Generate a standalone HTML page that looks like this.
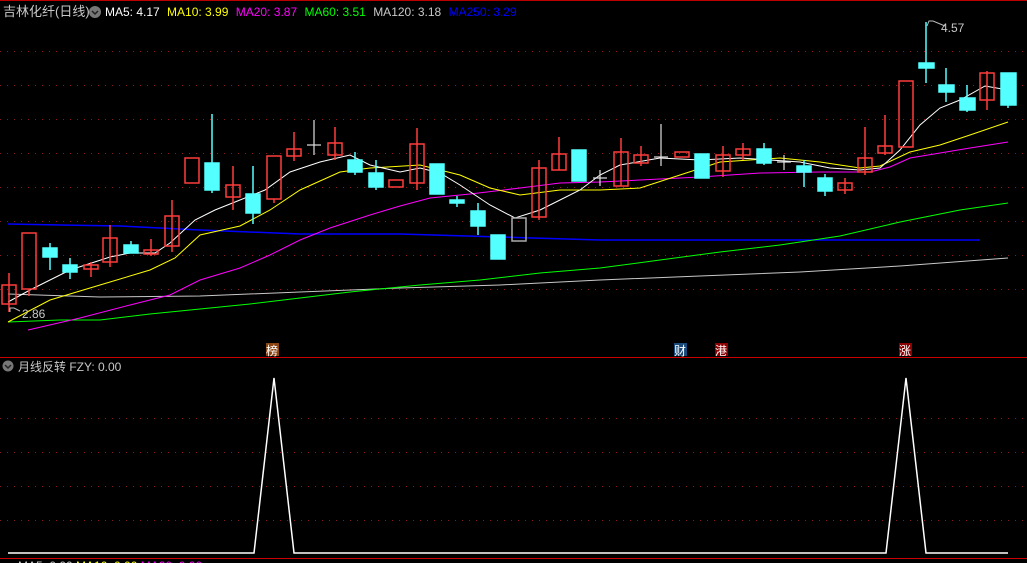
<!DOCTYPE html>
<html><head><meta charset="utf-8"><style>
html,body{margin:0;padding:0;background:#000;width:1027px;height:563px;overflow:hidden}
svg{display:block}
text{font-family:"Liberation Sans","Noto Sans CJK SC",sans-serif}
</style></head><body>
<svg width="1027" height="563" viewBox="0 0 1027 563" xmlns="http://www.w3.org/2000/svg">
<rect width="1027" height="563" fill="#000"/>
<line x1="0" y1="0.5" x2="1027" y2="0.5" stroke="#b00" />
<g stroke="#8a1a1a" stroke-dasharray="1,6" stroke-width="1">
<line x1="0" y1="51.5" x2="1027" y2="51.5"/><line x1="0" y1="85.5" x2="1027" y2="85.5"/>
<line x1="0" y1="119.5" x2="1027" y2="119.5"/><line x1="0" y1="153.5" x2="1027" y2="153.5"/>
<line x1="0" y1="187.5" x2="1027" y2="187.5"/><line x1="0" y1="221.5" x2="1027" y2="221.5"/>
<line x1="0" y1="255.5" x2="1027" y2="255.5"/><line x1="0" y1="289.5" x2="1027" y2="289.5"/>
<line x1="0" y1="418.5" x2="1027" y2="418.5"/>
<line x1="0" y1="452.5" x2="1027" y2="452.5"/><line x1="0" y1="486.5" x2="1027" y2="486.5"/>
<line x1="0" y1="520.5" x2="1027" y2="520.5"/>
</g>
<line x1="0" y1="357.5" x2="1027" y2="357.5" stroke="#c00"/>
<line x1="0" y1="558.5" x2="1027" y2="558.5" stroke="#c00"/>

<!-- MA lines -->
<polyline fill="none" stroke="#0000ff" stroke-width="1.5" points="8,224 60,225 120,226 200,230 300,234 400,234 500,237 600,240 700,240 800,240 900,240 980,240"/>
<polyline fill="none" stroke="#c8c8c8" stroke-width="1" points="8,294 100,297 200,296 300,292 400,288 500,285 600,280 700,276 800,272 900,266 1008,258"/>
<polyline fill="none" stroke="#00ff00" stroke-width="1" points="8,322 60,320 100,320 150,314 200,309 250,304 300,298 350,292 420,285 480,280 540,273 600,268 660,260 720,252 780,245 840,236 900,222 960,210 1008,203"/>
<polyline fill="none" stroke="#ff00ff" stroke-width="1" points="28,330 80,318 130,305 170,295 200,280 240,268 270,255 300,240 330,228 370,215 400,206 430,198 470,194 520,188 560,183 600,182 640,180 700,177 760,173 820,172 870,172 890,167 910,158 940,153 970,148 1008,142"/>
<polyline fill="none" stroke="#ffff00" stroke-width="1" points="8,322 50,300 100,285 150,270 175,258 200,235 240,226 270,210 300,190 340,172 370,168 420,165 460,175 490,188 520,195 560,190 600,190 640,188 680,175 720,162 780,158 820,162 860,168 880,166 910,152 940,145 970,135 1008,122"/>
<polyline fill="none" stroke="#ffffff" stroke-width="1" points="8,302 30,290 70,270 110,257 130,253 155,253 170,243 195,220 215,210 240,200 265,190 290,172 320,162 350,155 370,165 400,172 420,168 440,173 460,185 490,205 515,218 540,210 560,200 580,190 600,175 620,165 660,158 700,160 740,158 770,160 800,162 830,168 860,170 880,168 900,150 920,125 940,108 960,100 985,86 1008,90"/>

<!-- candles -->
<g stroke-width="1.5">
<g stroke="#ff3c3c" fill="none">
<line x1="9" y1="273" x2="9" y2="312"/><rect x="2" y="285" width="14" height="19"/>
<line x1="29" y1="289" x2="29" y2="296"/><rect x="22" y="233" width="14" height="56"/>
<line x1="91" y1="262" x2="91" y2="277"/><rect x="84" y="265" width="14" height="4"/>
<line x1="110" y1="225" x2="110" y2="267"/><rect x="103" y="238" width="14" height="24"/>
<line x1="151" y1="239" x2="151" y2="256"/><rect x="144" y="250" width="14" height="4"/>
<line x1="172" y1="200" x2="172" y2="252"/><rect x="165" y="216" width="14" height="30"/>
<rect x="185" y="158" width="14" height="25"/>
<line x1="233" y1="166" x2="233" y2="210"/><rect x="226" y="185" width="14" height="12"/>
<line x1="274" y1="199" x2="274" y2="203"/><rect x="267" y="156" width="14" height="43"/>
<line x1="294" y1="132" x2="294" y2="161"/><rect x="287" y="149" width="14" height="7"/>
<line x1="335" y1="127" x2="335" y2="160"/><rect x="328" y="143" width="14" height="12"/>
<rect x="389" y="180" width="14" height="7"/>
<line x1="417" y1="128" x2="417" y2="190"/><rect x="410" y="144" width="14" height="39"/>
<rect x="512" y="218" width="14" height="23" stroke="#aaa"/>
<line x1="539" y1="160" x2="539" y2="220"/><rect x="532" y="168" width="14" height="49"/>
<line x1="559" y1="137" x2="559" y2="170"/><rect x="552" y="154" width="14" height="16"/>
<line x1="621" y1="138" x2="621" y2="186"/><rect x="614" y="152" width="14" height="34"/>
<line x1="641" y1="146" x2="641" y2="166"/><rect x="634" y="155" width="14" height="8"/>
<rect x="675" y="152" width="14" height="5"/>
<line x1="723" y1="146" x2="723" y2="177"/><rect x="716" y="155" width="14" height="16"/>
<line x1="743" y1="143" x2="743" y2="160"/><rect x="736" y="149" width="14" height="6"/>
<line x1="845" y1="178" x2="845" y2="194"/><rect x="838" y="183" width="14" height="7"/>
<line x1="865" y1="127" x2="865" y2="175"/><rect x="858" y="158" width="14" height="14"/>
<line x1="885" y1="115" x2="885" y2="155"/><rect x="878" y="146" width="14" height="7"/>
<rect x="899" y="81" width="14" height="66"/>
<line x1="987" y1="71" x2="987" y2="110"/><rect x="980" y="73" width="14" height="27"/>
</g>
<g stroke="#54ffff" fill="#54ffff">
<line x1="50" y1="243" x2="50" y2="270"/><rect x="43" y="248" width="14" height="9"/>
<line x1="70" y1="258" x2="70" y2="279"/><rect x="63" y="265" width="14" height="7"/>
<line x1="131" y1="241" x2="131" y2="253"/><rect x="124" y="245" width="14" height="8"/>
<line x1="212" y1="114" x2="212" y2="193"/><rect x="205" y="163" width="14" height="27"/>
<line x1="253" y1="166" x2="253" y2="224"/><rect x="246" y="194" width="14" height="19"/>
<line x1="355" y1="152" x2="355" y2="175"/><rect x="348" y="160" width="14" height="12"/>
<line x1="376" y1="160" x2="376" y2="190"/><rect x="369" y="173" width="14" height="14"/>
<rect x="430" y="164" width="14" height="30"/>
<line x1="457" y1="196" x2="457" y2="207"/><rect x="450" y="200" width="14" height="3"/>
<line x1="478" y1="203" x2="478" y2="235"/><rect x="471" y="211" width="14" height="15"/>
<rect x="491" y="235" width="14" height="24"/>
<rect x="572" y="150" width="14" height="31"/>
<rect x="695" y="154" width="14" height="24"/>
<line x1="764" y1="143" x2="764" y2="165"/><rect x="757" y="149" width="14" height="14"/>
<line x1="804" y1="160" x2="804" y2="187"/><rect x="797" y="166" width="14" height="6"/>
<line x1="825" y1="174" x2="825" y2="196"/><rect x="818" y="178" width="14" height="13"/>
<line x1="926" y1="22" x2="926" y2="83"/><rect x="919" y="63" width="15" height="5"/>
<line x1="946" y1="68" x2="946" y2="102"/><rect x="939" y="85" width="15" height="7"/>
<line x1="967" y1="85" x2="967" y2="112"/><rect x="960" y="98" width="15" height="12"/>
<line x1="1008" y1="73" x2="1008" y2="108"/><rect x="1001" y="73" width="15" height="32"/>
</g>
<g stroke="#e0e0e0" stroke-width="1.2">
<line x1="314" y1="120" x2="314" y2="155"/><line x1="307" y1="145" x2="321" y2="145"/>
<line x1="661" y1="124" x2="661" y2="166"/><line x1="654" y1="157" x2="668" y2="157"/>
<line x1="784" y1="155" x2="784" y2="170"/><line x1="777" y1="162" x2="791" y2="162"/>
<line x1="600" y1="170" x2="600" y2="186"/><line x1="593" y1="178" x2="607" y2="178"/>
</g>
</g>

<!-- high/low labels -->
<polyline points="927,26 929,21 933,21 945,26" fill="none" stroke="#bbb"/>
<text x="941" y="32" fill="#c8c8c8" font-size="12">4.57</text>
<polyline points="10,312 10,308 14,308 20,311" fill="none" stroke="#bbb"/>
<text x="22" y="318" fill="#c8c8c8" font-size="12">2.86</text>

<!-- legend -->
<text x="3" y="16" fill="#c8c8c8" font-size="13">吉林化纤(日线)</text>
<circle cx="95" cy="12" r="6" fill="#777"/>
<polyline points="92,11 95,14 98,11" fill="none" stroke="#222" stroke-width="1.5"/>
<text x="105" y="16" font-size="12"><tspan fill="#fff">MA5: 4.17 </tspan><tspan fill="#ffff00" dx="4">MA10: 3.99 </tspan><tspan fill="#ff00ff" dx="4">MA20: 3.87 </tspan><tspan fill="#00ff00" dx="4">MA60: 3.51 </tspan><tspan fill="#c8c8c8" dx="4">MA120: 3.18 </tspan><tspan fill="#0000ff" dx="4">MA250: 3.29</tspan></text>

<!-- markers -->
<rect x="266" y="343" width="13" height="13" fill="#8b4513"/><text x="266" y="355" fill="#fff" font-size="12">榜</text>
<rect x="674" y="343" width="13" height="13" fill="#1a4a7a"/><text x="674" y="355" fill="#fff" font-size="12">财</text>
<rect x="715" y="343" width="13" height="13" fill="#8b0000"/><text x="715" y="355" fill="#fff" font-size="12">港</text>
<rect x="899" y="343" width="13" height="13" fill="#8b0000"/><text x="899" y="355" fill="#fff" font-size="12">涨</text>

<!-- lower panel -->
<circle cx="8" cy="366" r="5.5" fill="#777"/>
<polyline points="5,365 8,368 11,365" fill="none" stroke="#222" stroke-width="1.5"/>
<text x="18" y="371" fill="#c8c8c8" font-size="12">月线反转  FZY: 0.00</text>
<polyline fill="none" stroke="#fff" stroke-width="1.5" points="8,553 254,553 274,378 294,553 886,553 906,378 926,553 1008,553"/>
<text x="18" y="570" font-size="12"><tspan fill="#c8c8c8">MA5: 0.00 </tspan><tspan fill="#ffff00">MA10: 0.00 </tspan><tspan fill="#ff00ff">MA20: 0.00</tspan></text>
</svg>
</body></html>
